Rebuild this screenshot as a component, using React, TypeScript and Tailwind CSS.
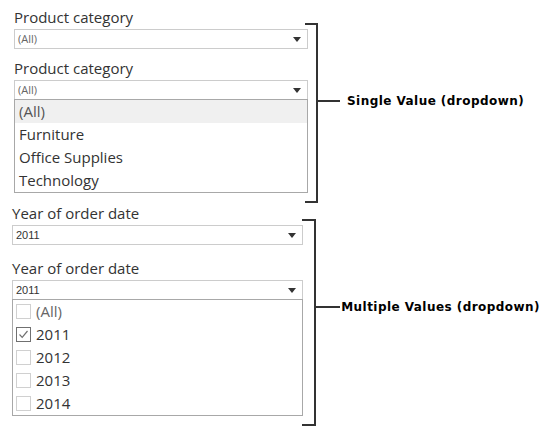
import React from "react";

const labelFont = { fontFamily: '"Open Sans", "Noto Sans", sans-serif' };

function Arrow() {
  return (
    <svg width="8" height="5" viewBox="0 0 8 5" className="shrink-0">
      <path d="M0 0 H8 L4 5 Z" fill="#333333" />
    </svg>
  );
}

function Closed({ value, mono }: { value: string; mono?: boolean }) {
  return (
    <div className="flex h-[20px] items-center justify-between border border-[#cccccc] bg-white pl-[3px] pr-[6px]">
      <span
        className={mono ? "text-[11px] text-[#333333]" : "text-[11px] text-[#666666]"}
        style={{ fontFamily: mono ? '"Liberation Sans", Arial, sans-serif' : '"Open Sans", sans-serif' }}
      >
        {value}
      </span>
      <Arrow />
    </div>
  );
}

function OpenHead({ value, mono }: { value: string; mono?: boolean }) {
  return (
    <div className="flex h-[19px] items-center justify-between border-x border-t border-[#cccccc] bg-white pl-[3px] pr-[6px]">
      <span
        className={mono ? "text-[11px] text-[#333333]" : "text-[11px] text-[#666666]"}
        style={{ fontFamily: mono ? '"Liberation Sans", Arial, sans-serif' : '"Open Sans", sans-serif' }}
      >
        {value}
      </span>
      <Arrow />
    </div>
  );
}

function Box({ checked }: { checked?: boolean }) {
  return (
    <div
      className={
        checked
          ? "flex h-[15px] w-[15px] items-center justify-center border border-[#707070] bg-white"
          : "h-[15px] w-[15px] border border-[#d0d0d0] bg-white"
      }
    >
      {checked && (
        <svg width="11" height="11" viewBox="0 0 11 11">
          <path d="M1.5 5.5 L4.2 8.3 L9.5 2" fill="none" stroke="#707070" strokeWidth="1.2" />
        </svg>
      )}
    </div>
  );
}

function Bracket({ h, w, tickTop, tickW, label, gap }: { h: number; w: number; tickTop: number; tickW: number; label: string; gap: number }) {
  return (
    <div className="flex items-start">
      <div className="border-y-2 border-r-2 border-[#333333]" style={{ height: h, width: w }} />
      <div className="flex h-[16px] items-center" style={{ marginTop: tickTop }}>
        <div className="h-[2px] bg-[#333333]" style={{ width: tickW }} />
        <span
          className="whitespace-nowrap text-[12px] font-bold tracking-[0.45px] text-black"
          style={{ fontFamily: '"DejaVu Sans", Verdana, sans-serif', marginLeft: gap }}
        >
          {label}
        </span>
      </div>
    </div>
  );
}

export default function App() {
  const categories = ["(All)", "Furniture", "Office Supplies", "Technology"];
  const years = ["(All)", "2011", "2012", "2013", "2014"];

  return (
    <div className="h-[431px] w-[540px] overflow-hidden bg-white">
      {/* single value */}
      <div className="flex items-start">
        <div className="ml-[14px] w-[294px] pt-[7px]" style={labelFont}>
          <div className="text-[15px] leading-[20px] text-[#333333]">Product category</div>
          <div className="mt-[2px]">
            <Closed value="(All)" />
          </div>
          <div className="mt-[9px] text-[15px] leading-[20px] text-[#333333]">Product category</div>
          <div className="mt-[2px]">
            <OpenHead value="(All)" />
            <div className="border border-[#a8a8a8] bg-white">
              {categories.map((c, i) => (
                <div
                  key={c}
                  className={
                    i === 0
                      ? "flex h-[23px] items-center bg-[#f0f0f0] pl-[4px] text-[15px] text-[#555555]"
                      : "flex h-[23px] items-center pl-[4px] text-[15px] text-[#333333]"
                  }
                >
                  {c}
                </div>
              ))}
            </div>
          </div>
        </div>
        <div className="-ml-[3px] mt-[23px]">
          <Bracket h={180} w={13} tickTop={70} tickW={22} gap={7} label="Single Value (dropdown)" />
        </div>
      </div>

      {/* multiple values */}
      <div className="flex items-start">
        <div className="ml-[12px] w-[293px]" style={labelFont}>
          <div className="text-[15px] leading-[20px] text-[#333333]">Year of order date</div>
          <div className="mt-[2px]">
            <Closed value="2011" mono />
          </div>
          <div className="mt-[13px] text-[15px] leading-[20px] text-[#333333]">Year of order date</div>
          <div className="mt-[2px]">
            <OpenHead value="2011" mono />
            <div className="border border-[#a8a8a8] bg-white">
              {years.map((y, i) => (
                <div key={y} className="flex h-[23px] items-center gap-[5px] pl-[3px]">
                  <Box checked={i === 1} />
                  <span className={i === 0 ? "text-[15px] text-[#666666]" : "text-[15px] text-[#333333]"}>{y}</span>
                </div>
              ))}
            </div>
          </div>
        </div>
        <div className="-ml-[1px] mt-[16px]">
          <Bracket h={207} w={14} tickTop={80} tickW={24} gap={1} label="Multiple Values (dropdown)" />
        </div>
      </div>
    </div>
  );
}
